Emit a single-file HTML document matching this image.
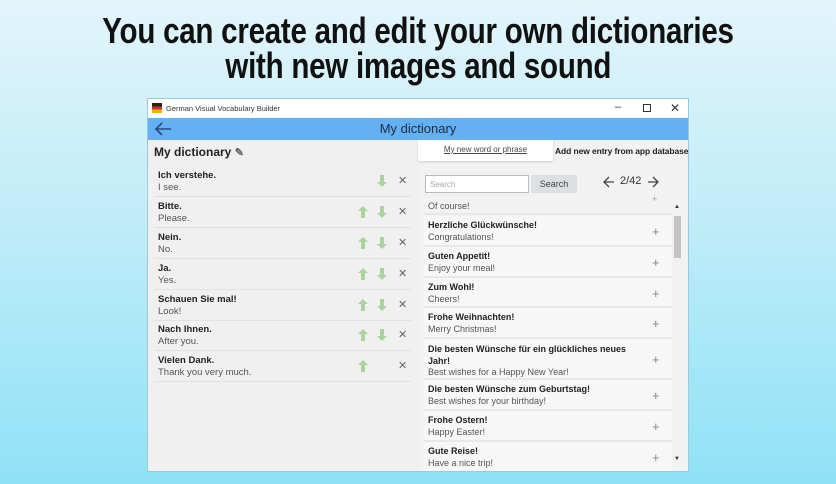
<!DOCTYPE html>
<html><head><meta charset="utf-8"><style>
*{margin:0;padding:0;box-sizing:border-box}
body{width:836px;height:484px;overflow:hidden;background:linear-gradient(#e3f5fb,#c0ecf8 45%,#8fe2f6);font-family:"Liberation Sans",sans-serif;position:relative}
.h{position:absolute;left:0;width:836px;text-align:center;font-family:"Liberation Sans Narrow","Liberation Sans",sans-serif;font-weight:bold;font-size:36px;color:#111;letter-spacing:-0.3px}
.h span{display:inline-block;transform:scaleX(0.82)}
.win{position:absolute;left:147px;top:98px;width:542px;height:374px;background:#f0f0f0;border:1px solid #9cc9dc;overflow:hidden}
.tb{height:19px;background:#fff;font-size:7.5px;color:#333;position:relative}
.bar{height:22px;background:#64b0f5;position:relative;color:#1d2b3a;font-size:13px;text-align:center;line-height:22px}
.abs{position:absolute}
.left{position:absolute;left:0;top:41px;width:270px;bottom:0;background:#f0f0f0}
.right{position:absolute;left:270px;top:41px;right:0;bottom:0;background:#f2f2f2}
.row{position:absolute;left:6px;width:257px;height:31px;border-bottom:1px solid #e2e2e2}
.row b{position:absolute;left:4px;top:4px;font-size:9.5px;color:#222}
.row i{position:absolute;left:4px;top:16px;font-size:9.5px;color:#555;font-style:normal}
.up,.dn{position:absolute;top:9px}
.x{position:absolute;left:244px;top:8px;font-size:11px;color:#666}
.rr{position:absolute;left:6px;width:248px;background:#f7f7f7;border-bottom:2px solid #e8e8e8}
.rr b{position:absolute;left:4px;top:4px;font-size:9px;color:#222}
.rr i{position:absolute;left:4px;font-size:9px;color:#555;font-style:normal}
.pl{position:absolute;left:228px;font-size:13px;color:#888}
</style></head><body>
<svg width="0" height="0" style="position:absolute"><defs>
<symbol id="up" viewBox="0 0 10 12"><path d="M5 0L10 5H7V12H3V5H0Z" fill="#a9d59c"/></symbol>
<symbol id="dn" viewBox="0 0 10 12"><path d="M5 12L10 7H7V0H3V7H0Z" fill="#a9d59c"/></symbol>
</defs></svg>
<div class="h" style="top:10px"><span>You can create and edit your own dictionaries</span></div>
<div class="h" style="top:45px"><span>with new images and sound</span></div>
<div class="win">
 <div class="tb">
  <div class="abs" style="left:4px;top:4px;width:10px;height:10px;background:linear-gradient(#222 33%,#c33 33%,#c33 66%,#e8b800 66%)"></div>
  <div class="abs" style="left:18px;top:5px">German Visual Vocabulary Builder</div>
  <div class="abs" style="left:467px;top:2px;font-size:11px">–</div>
  <div class="abs" style="left:495px;top:5px;width:8px;height:8px;border:1px solid #333"></div>
  <div class="abs" style="left:522px;top:2px;font-size:12px">✕</div>
 </div>
 <div class="bar">My dictionary
  <svg class="abs" style="left:6px;top:4px" width="18" height="14" viewBox="0 0 18 14"><path d="M17 7H2M8 1L2 7l6 6" stroke="#2a4a7a" stroke-width="1.6" fill="none"/></svg>
 </div>
 <div class="left">
  <div class="abs" style="left:6px;top:5px;font-size:12px;font-weight:bold;color:#222">My dictionary <span style="color:#666;font-size:11px">✎</span></div>
  <div class="row" style="top:26px"><b>Ich verstehe.</b><i>I see.</i><svg class="dn" style="left:223px" width="10" height="12"><use href="#dn"/></svg><span class="x">✕</span></div>
  <div class="row" style="top:57px"><b>Bitte.</b><i>Please.</i><svg class="up" style="left:204px" width="10" height="12"><use href="#up"/></svg><svg class="dn" style="left:223px" width="10" height="12"><use href="#dn"/></svg><span class="x">✕</span></div>
  <div class="row" style="top:88px"><b>Nein.</b><i>No.</i><svg class="up" style="left:204px" width="10" height="12"><use href="#up"/></svg><svg class="dn" style="left:223px" width="10" height="12"><use href="#dn"/></svg><span class="x">✕</span></div>
  <div class="row" style="top:119px"><b>Ja.</b><i>Yes.</i><svg class="up" style="left:204px" width="10" height="12"><use href="#up"/></svg><svg class="dn" style="left:223px" width="10" height="12"><use href="#dn"/></svg><span class="x">✕</span></div>
  <div class="row" style="top:150px"><b>Schauen Sie mal!</b><i>Look!</i><svg class="up" style="left:204px" width="10" height="12"><use href="#up"/></svg><svg class="dn" style="left:223px" width="10" height="12"><use href="#dn"/></svg><span class="x">✕</span></div>
  <div class="row" style="top:180px"><b>Nach Ihnen.</b><i>After you.</i><svg class="up" style="left:204px" width="10" height="12"><use href="#up"/></svg><svg class="dn" style="left:223px" width="10" height="12"><use href="#dn"/></svg><span class="x">✕</span></div>
  <div class="row" style="top:211px"><b>Vielen Dank.</b><i>Thank you very much.</i><svg class="up" style="left:204px" width="10" height="12"><use href="#up"/></svg><span class="x">✕</span></div>
 </div>
 <div class="right">
  <div class="abs" style="left:0;top:0;width:135px;height:21px;background:#fff;box-shadow:0 1px 2px #ccc;font-size:8px;color:#444;text-decoration:underline;text-align:center;line-height:20px">My new word or phrase</div>
  <div class="abs" style="left:137px;top:6px;font-size:8.5px;font-weight:bold;color:#222;white-space:nowrap;letter-spacing:-0.1px">Add new entry from app database</div>
  <div class="abs" style="left:7px;top:35px;width:104px;height:18px;background:#fff;border:1px solid #bbb;font-size:8px;color:#aaa;padding:4px 4px">Search</div>
  <div class="abs" style="left:113px;top:35px;width:46px;height:18px;background:#dde0e3;font-size:9px;color:#444;text-align:center;line-height:18px">Search</div>
  <svg class="abs" style="left:185px;top:36px" width="12" height="12" viewBox="0 0 12 12"><path d="M11 6H1M6 1L1 6l5 5" stroke="#444" stroke-width="1.3" fill="none"/></svg>
  <div class="abs" style="left:202px;top:35px;font-size:11px;color:#333">2/42</div>
  <svg class="abs" style="left:229px;top:36px" width="12" height="12" viewBox="0 0 12 12"><path d="M1 6H11M6 1l5 5-5 5" stroke="#444" stroke-width="1.3" fill="none"/></svg>
  <div class="abs" style="left:6px;top:57px;width:248px;height:18px;border-bottom:2px solid #e8e8e8;font-size:9px;color:#555;padding:4px 4px">Of course!<span style="position:absolute;left:228px;top:-3px;color:#999">+</span></div>
  <div class="abs" style="left:256px;top:64px;font-size:6px;color:#333">▲</div>
  <div class="abs" style="left:256px;top:316px;font-size:6px;color:#333">▼</div>
  <div class="abs" style="left:256px;top:76px;width:7px;height:42px;background:#c4c4c4"></div>
  <div class="rr" style="top:76px;height:31px"><b>Herzliche Glückwünsche!</b><i style="top:16px">Congratulations!</i><span class="pl" style="top:8px">+</span></div>
  <div class="rr" style="top:107px;height:31px"><b>Guten Appetit!</b><i style="top:16px">Enjoy your meal!</i><span class="pl" style="top:8px">+</span></div>
  <div class="rr" style="top:138px;height:30px"><b>Zum Wohl!</b><i style="top:16px">Cheers!</i><span class="pl" style="top:8px">+</span></div>
  <div class="rr" style="top:168px;height:31px"><b>Frohe Weihnachten!</b><i style="top:16px">Merry Christmas!</i><span class="pl" style="top:8px">+</span></div>
  <div class="rr" style="top:199px;height:41px"><b style="width:210px;line-height:12px">Die besten Wünsche für ein glückliches neues Jahr!</b><i style="top:28px">Best wishes for a Happy New Year!</i><span class="pl" style="top:13px">+</span></div>
  <div class="rr" style="top:240px;height:31px"><b>Die besten Wünsche zum Geburtstag!</b><i style="top:16px">Best wishes for your birthday!</i><span class="pl" style="top:8px">+</span></div>
  <div class="rr" style="top:271px;height:31px"><b>Frohe Ostern!</b><i style="top:16px">Happy Easter!</i><span class="pl" style="top:8px">+</span></div>
  <div class="rr" style="top:302px;height:31px;border:none"><b>Gute Reise!</b><i style="top:16px">Have a nice trip!</i><span class="pl" style="top:8px">+</span></div>
 </div>
</div>
</body></html>
